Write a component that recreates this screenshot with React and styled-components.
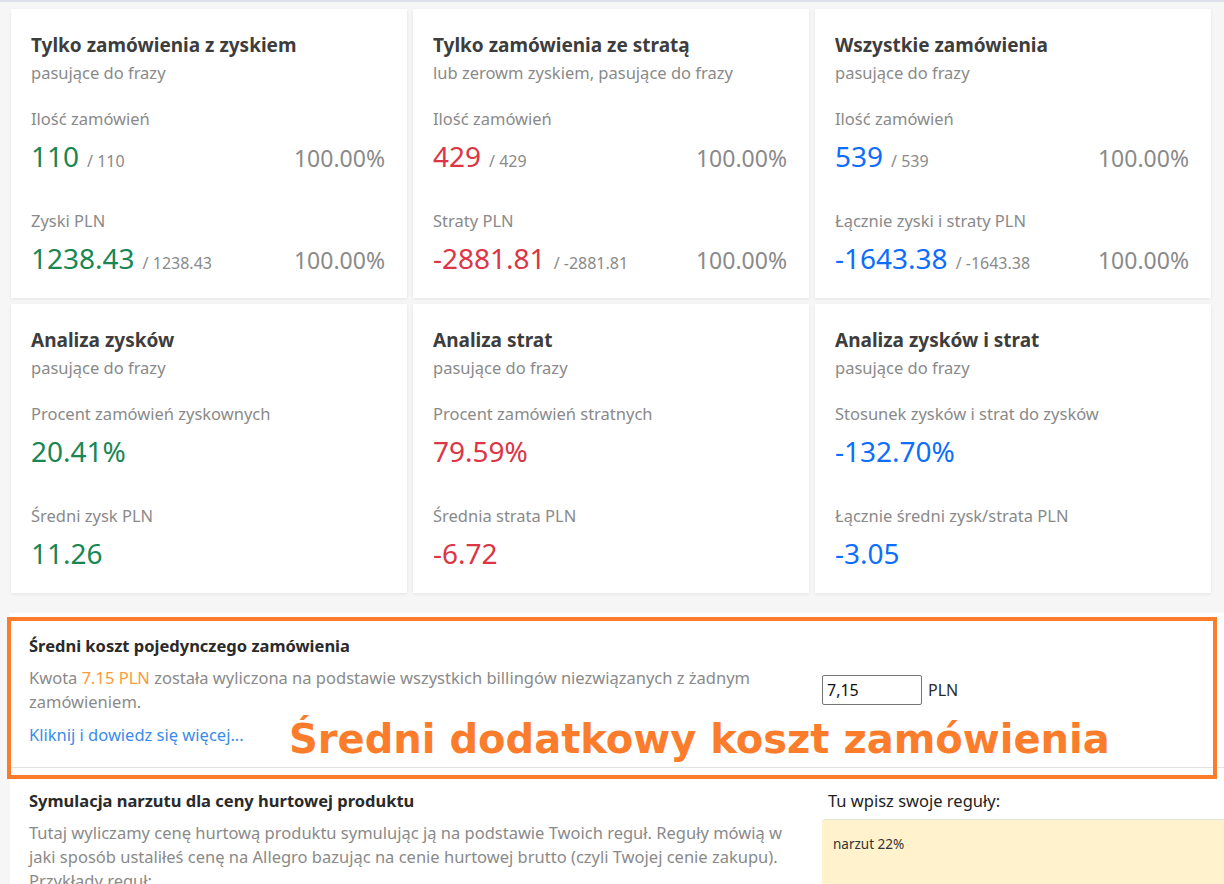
import React from 'react';
import styled, { createGlobalStyle } from 'styled-components';

const GlobalStyle = createGlobalStyle`
  html, body {
    margin: 0;
    padding: 0;
    background: #f6f6f7;
    overflow: hidden;
    font-family: "Noto Sans", "Open Sans", sans-serif;
  }
`;

const colors = {
  green: '#198754',
  red: '#dc3545',
  blue: '#0d6efd',
};

const Page = styled.div`
  position: relative;
  width: 1224px;
  height: 884px;
  border-top: 2px solid #dedfec;
  box-sizing: border-box;
`;

const Grid = styled.div`
  display: grid;
  grid-template-columns: repeat(3, 396px);
  grid-auto-rows: 289px;
  gap: 6px;
  padding: 7px 0 0 11px;
`;

const Card = styled.div`
  background: #fff;
  box-shadow: 0 1px 3px rgba(0, 0, 0, 0.08);
  padding: 22px 22px 0 20px;
  box-sizing: border-box;
`;

const CardTitle = styled.div`
  font-size: 19px;
  font-weight: 700;
  color: #3d3d3d;
  line-height: 28px;
`;

const CardSub = styled.div`
  font-size: 16.5px;
  color: #8a8a8a;
  line-height: 28px;
`;

const Label = styled.div`
  font-size: 16.5px;
  color: #8a8a8a;
  line-height: 28px;
  margin-top: ${p => p.$first ? '18px' : '29px'};
`;

const ValueRow = styled.div`
  display: flex;
  align-items: baseline;
  justify-content: space-between;
  height: 44px;
  line-height: 44px;
  margin-top: 1px;
`;

const Big = styled.span`
  font-size: 28px;
  color: ${p => p.$color};
`;

const Of = styled.span`
  font-size: 16px;
  color: #8a8a8a;
  margin-left: 8px;
`;

const Pct = styled.span`
  font-size: 23px;
  color: #8a8a8a;
`;

const Panel = styled.div`
  background: #fff;
  margin: 20px 0 0 10px;
  width: 1230px;
`;

const Section = styled.div`
  display: grid;
  grid-template-columns: 780px 1fr;
  column-gap: 13px;
  padding: ${p => p.$first ? '19px 0 20px 19px' : '19px 0 10px 19px'};
  border-bottom: ${p => p.$first ? '1px solid #e2e2e2' : 'none'};
`;

const SectionTitle = styled.div`
  font-size: 16.5px;
  font-weight: 700;
  color: #2a2a2a;
  line-height: 28px;
`;

const Text = styled.div`
  font-size: 16.5px;
  color: #8a8a8a;
  line-height: 24px;
  margin-top: 6px;
  white-space: ${p => p.$lines ? 'nowrap' : 'normal'};
`;

const Accent = styled.span`
  color: #fd9a3a;
`;

const MoreLink = styled.a`
  display: block;
  font-size: 16.5px;
  color: #3a8ce9;
  line-height: 24px;
  margin-top: 9px;
  text-decoration: none;
`;

const Side = styled.div`
  display: flex;
  align-items: center;
  gap: 6px;
  align-self: start;
  margin-top: ${p => p.$top || '0'};
`;

const Amount = styled.input`
  width: 100px;
  height: 30px;
  box-sizing: border-box;
  border: 1px solid #767676;
  border-radius: 2px;
  font-family: inherit;
  font-size: 16px;
  padding: 0 4px;
  color: #111;
`;

const Unit = styled.span`
  font-size: 16px;
  color: #2a2a2a;
`;

const RulesLabel = styled.div`
  font-size: 16.5px;
  color: #222;
  line-height: 28px;
  margin: 0 0 4px 6px;
`;

const Rules = styled.div`
  background: #fff2cc;
  border-top: 1px solid #e4e0d4;
  border-radius: 4px 0 0 0;
  height: 120px;
  padding: 15px 11px;
  font-size: 13.5px;
  color: #333;
`;

const Highlight = styled.div`
  position: absolute;
  left: 7px;
  top: 615px;
  width: 1210px;
  height: 162px;
  box-sizing: border-box;
  border: 4px solid #fb7d2c;
  pointer-events: none;
`;

const Callout = styled.div`
  position: absolute;
  left: 278px;
  top: 95px;
  font-family: "DejaVu Sans", Verdana, sans-serif;
  font-weight: 700;
  font-size: 40px;
  color: #fb7d2c;
  white-space: nowrap;
`;

const cards = [
  {
    title: 'Tylko zamówienia z zyskiem', sub: 'pasujące do frazy', color: colors.green,
    rows: [
      { label: 'Ilość zamówień', value: '110', of: '110', pct: '100.00%' },
      { label: 'Zyski PLN', value: '1238.43', of: '1238.43', pct: '100.00%' },
    ],
  },
  {
    title: 'Tylko zamówienia ze stratą', sub: 'lub zerowm zyskiem, pasujące do frazy', color: colors.red,
    rows: [
      { label: 'Ilość zamówień', value: '429', of: '429', pct: '100.00%' },
      { label: 'Straty PLN', value: '-2881.81', of: '-2881.81', pct: '100.00%' },
    ],
  },
  {
    title: 'Wszystkie zamówienia', sub: 'pasujące do frazy', color: colors.blue,
    rows: [
      { label: 'Ilość zamówień', value: '539', of: '539', pct: '100.00%' },
      { label: 'Łącznie zyski i straty PLN', value: '-1643.38', of: '-1643.38', pct: '100.00%' },
    ],
  },
  {
    title: 'Analiza zysków', sub: 'pasujące do frazy', color: colors.green,
    rows: [
      { label: 'Procent zamówień zyskownych', value: '20.41%' },
      { label: 'Średni zysk PLN', value: '11.26' },
    ],
  },
  {
    title: 'Analiza strat', sub: 'pasujące do frazy', color: colors.red,
    rows: [
      { label: 'Procent zamówień stratnych', value: '79.59%' },
      { label: 'Średnia strata PLN', value: '-6.72' },
    ],
  },
  {
    title: 'Analiza zysków i strat', sub: 'pasujące do frazy', color: colors.blue,
    rows: [
      { label: 'Stosunek zysków i strat do zysków', value: '-132.70%' },
      { label: 'Łącznie średni zysk/strata PLN', value: '-3.05' },
    ],
  },
];

function StatCard({ title, sub, color, rows }) {
  return (
    <Card>
      <CardTitle>{title}</CardTitle>
      <CardSub>{sub}</CardSub>
      {rows.map((r, i) => (
        <React.Fragment key={r.label}>
          <Label $first={i === 0}>{r.label}</Label>
          <ValueRow>
            <span>
              <Big $color={color}>{r.value}</Big>
              {r.of && <Of>/ {r.of}</Of>}
            </span>
            {r.pct && <Pct>{r.pct}</Pct>}
          </ValueRow>
        </React.Fragment>
      ))}
    </Card>
  );
}

export default function App() {
  return (
    <Page>
      <GlobalStyle />
      <Grid>
        {cards.map(c => <StatCard key={c.title} {...c} />)}
      </Grid>

      <Panel>
        <Section $first>
          <div>
            <SectionTitle>Średni koszt pojedynczego zamówienia</SectionTitle>
            <Text>
              Kwota <Accent>7.15 PLN</Accent> została wyliczona na podstawie wszystkich billingów niezwiązanych z żadnym zamówieniem.
            </Text>
            <MoreLink href="#">Kliknij i dowiedz się więcej...</MoreLink>
          </div>
          <Side $top="43px">
            <Amount defaultValue="7,15" />
            <Unit>PLN</Unit>
          </Side>
        </Section>
        <Section>
          <div>
            <SectionTitle>Symulacja narzutu dla ceny hurtowej produktu</SectionTitle>
            <Text $lines>
              Tutaj wyliczamy cenę hurtową produktu symulując ją na podstawie Twoich reguł. Reguły mówią w<br />
              jaki sposób ustaliłeś cenę na Allegro bazując na cenie hurtowej brutto (czyli Twojej cenie zakupu).<br />
              Przykłady reguł:
            </Text>
          </div>
          <div>
            <RulesLabel>Tu wpisz swoje reguły:</RulesLabel>
            <Rules>narzut 22%</Rules>
          </div>
        </Section>
      </Panel>

      <Highlight>
        <Callout>Średni dodatkowy koszt zamówienia</Callout>
      </Highlight>
    </Page>
  );
}
